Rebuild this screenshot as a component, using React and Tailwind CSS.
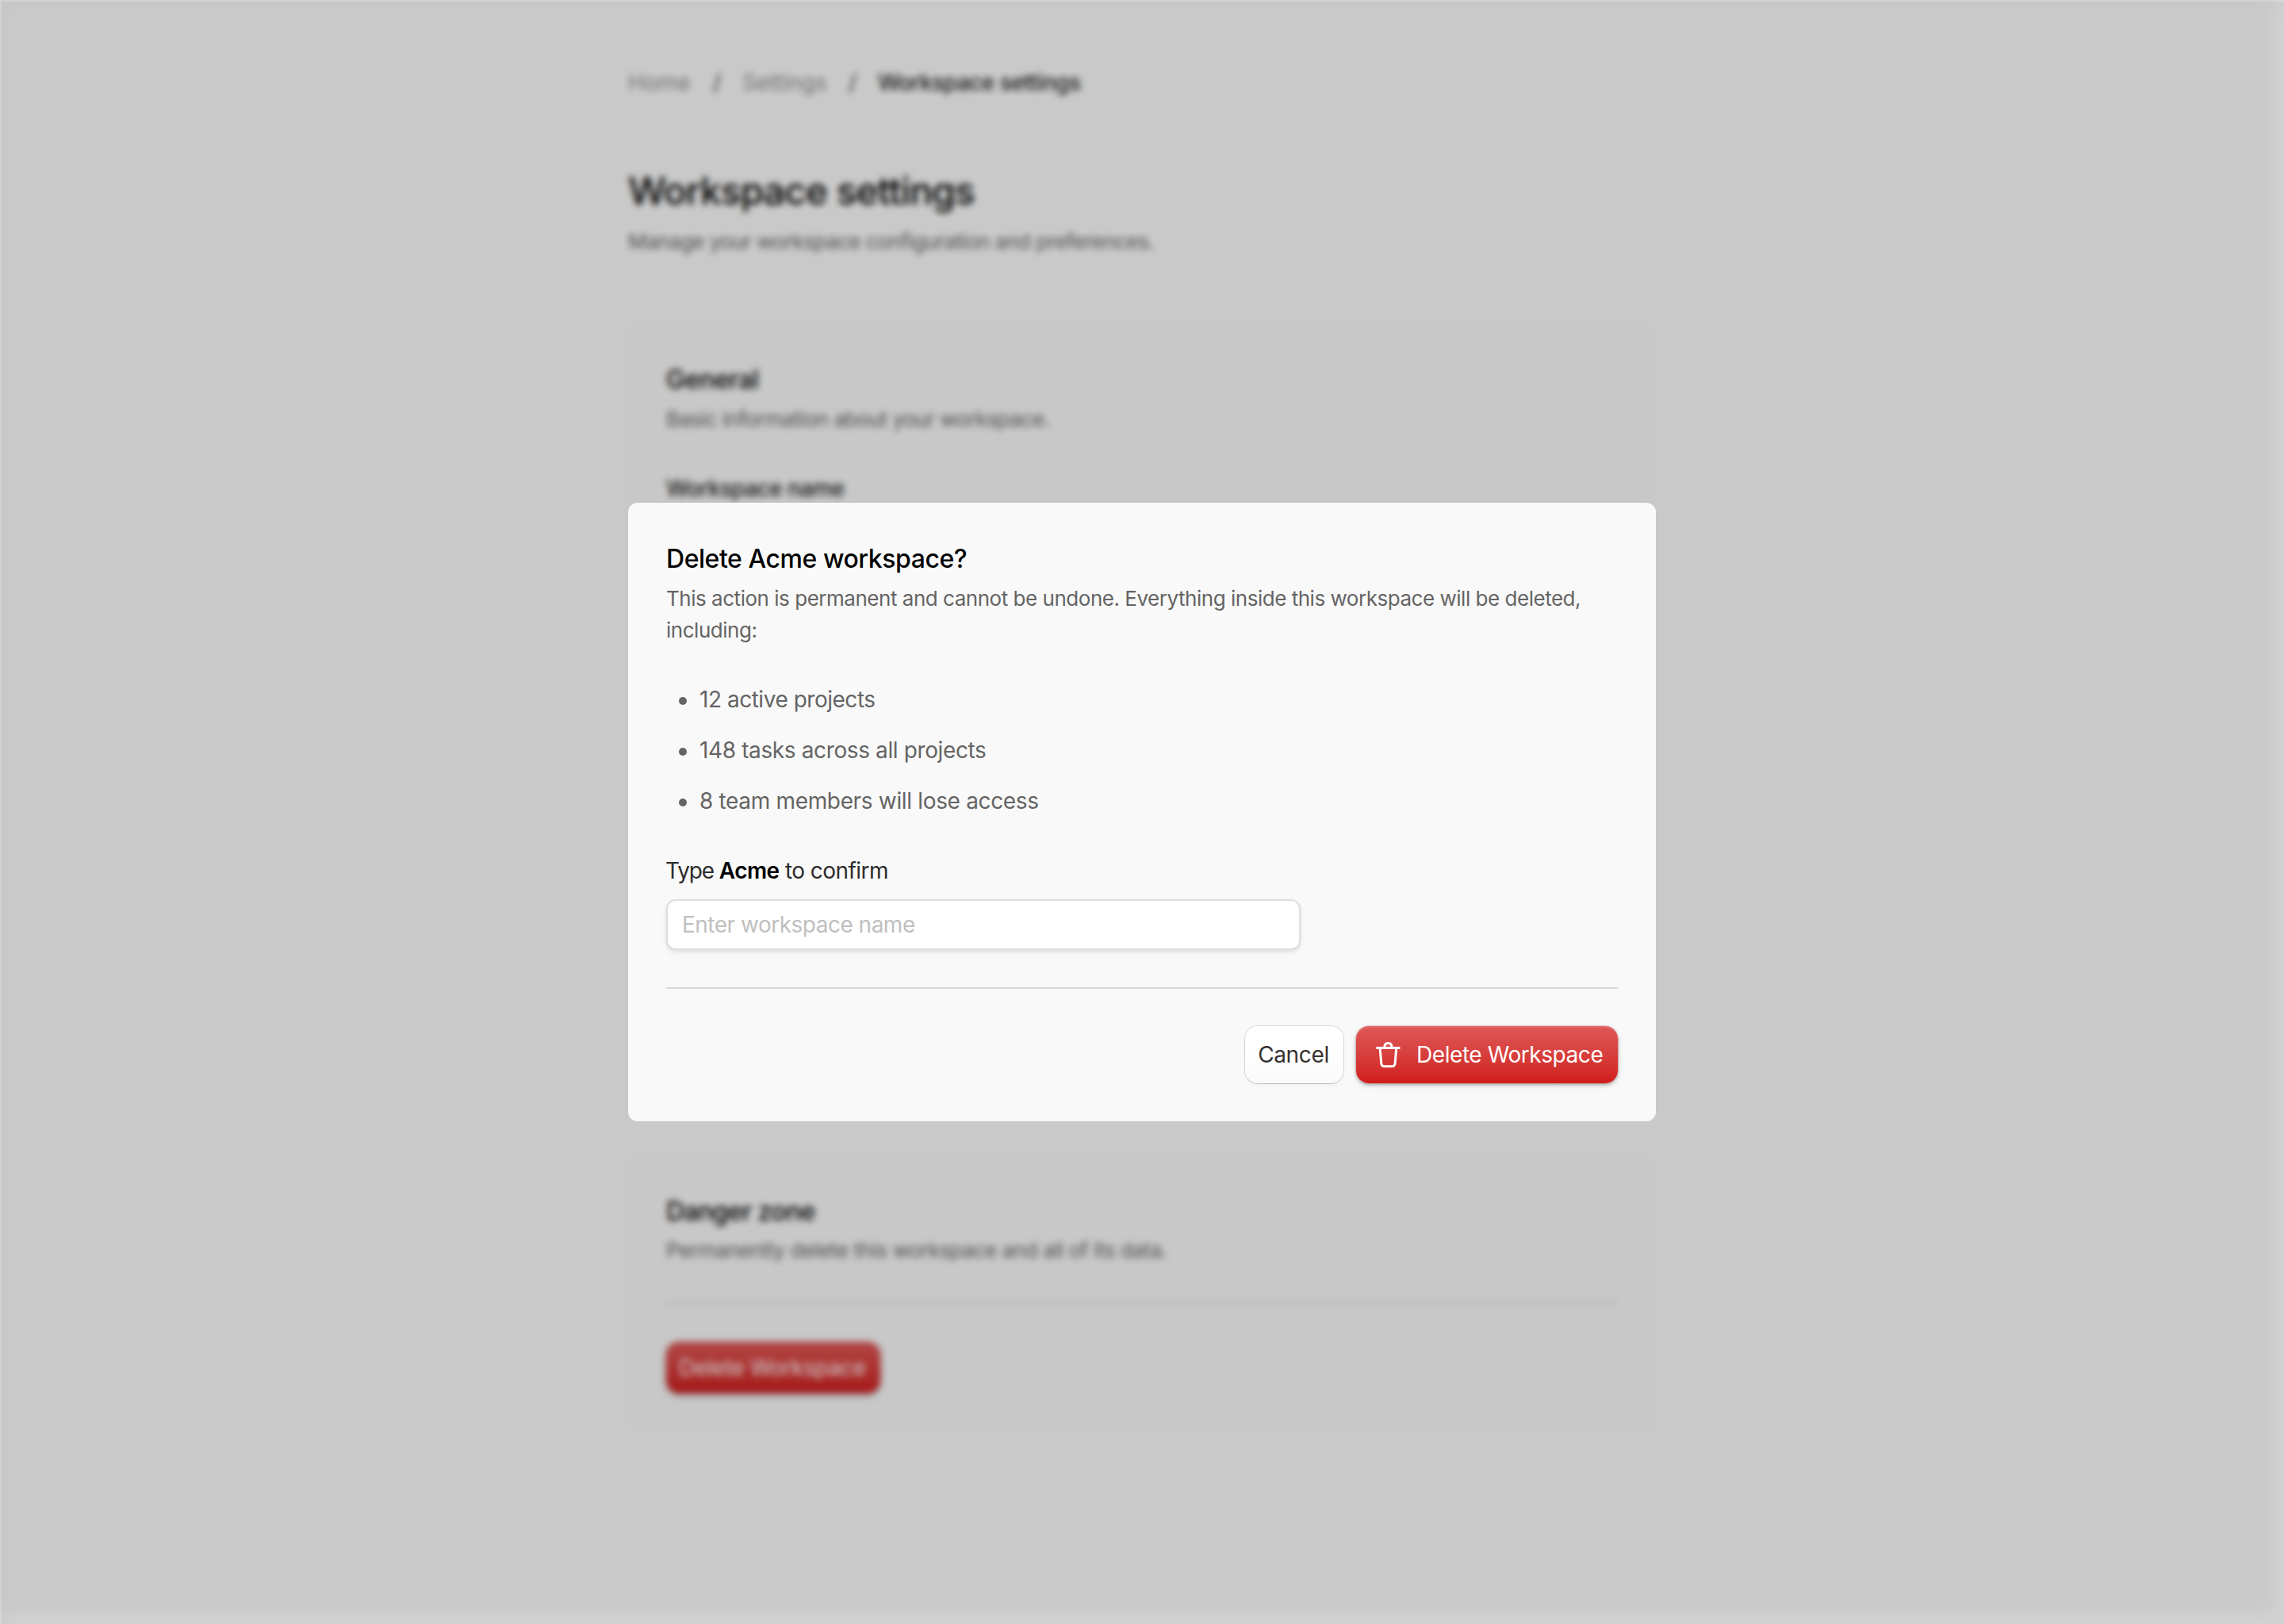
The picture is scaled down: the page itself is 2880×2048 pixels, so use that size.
const cx = (...parts) => parts.filter(Boolean).join(" ");

const CONSEQUENCES = [
  { text: "12 active projects", tracking: "tracking-[-0.017em]" },
  { text: "148 tasks across all projects", tracking: "tracking-[-0.0135em]" },
  { text: "8 team members will lose access", tracking: "tracking-[-0.012em]" },
];

function TrashIcon() {
  return (
    <svg
      className="mt-px h-[33px] w-[31px] shrink-0"
      viewBox="0 0 31 33"
      fill="none"
      stroke="currentColor"
      strokeWidth="3"
      strokeLinecap="round"
      strokeLinejoin="round"
    >
      <path d="M1.5 7.5H29.2" />
      <path d="M10.8 7C10.8 3.6 12.5 1.5 15.4 1.5S20 3.6 20 7" />
      <path d="M5.1 8L6.7 26.6Q7 30.8 10.8 30.8H20Q23.8 30.8 24.1 26.6L25.7 8" />
    </svg>
  );
}

function DangerButton({ className, children }) {
  return (
    <button
      className={cx(
        "flex items-center rounded-2xl bg-linear-to-b from-[#de5757] to-[#d01b1b] text-[28px] leading-10 tracking-[-0.0155em] text-white",
        "shadow-[0_0_0_0.5px_rgba(190,40,40,0.4),0_2px_4px_rgba(0,0,0,0.3),0_4px_8px_rgba(0,0,0,0.08),inset_0_2px_1px_rgba(255,255,255,0.12)]",
        className,
      )}
    >
      {children}
    </button>
  );
}

function Breadcrumbs() {
  return (
    <nav className="flex text-[28px] leading-10 text-[#8d8d8d]">
      <span className="w-[107px]">Home</span>
      <span className="w-[37px] text-[#3c3c3c]">/</span>
      <span className="w-[134px] tracking-[-0.002em]">Settings</span>
      <span className="w-[37px] text-[#3c3c3c]">/</span>
      <span className="font-medium tracking-[-0.0195em] text-[#202020]">Workspace settings</span>
    </nav>
  );
}

function SettingsPage() {
  return (
    <main className="mx-auto w-[1296px] pt-[84px]">
      <Breadcrumbs />
      <h1 className="mt-[87px] text-[48px] leading-[60px] font-medium tracking-[-0.021em] text-black">
        Workspace settings
      </h1>
      <p className="mt-[14px] text-[26px] leading-10 tracking-[-0.0203em] text-[#646464]">
        Manage your workspace configuration and preferences.
      </p>

      <section className="mt-[84px] h-[1001px] rounded-xl bg-[#fafafa] px-12 pt-12">
        <h2 className="text-[32px] leading-[44px] font-medium tracking-[-0.011em] text-black">General</h2>
        <p className="mt-2 text-[26px] leading-10 tracking-[-0.0195em] text-[#646464]">
          Basic information about your workspace.
        </p>
        <p className="mt-[47px] text-[28px] leading-10 font-medium tracking-[-0.022em] text-[#202020]">
          Workspace name
        </p>
      </section>

      <section className="mt-12 rounded-xl bg-[#fafafa] p-12">
        <h2 className="text-[32px] leading-[44px] font-medium tracking-[-0.02em] text-black">Danger zone</h2>
        <p className="mt-[7px] text-[26px] leading-10 tracking-[-0.0175em] text-[#646464]">
          Permanently delete this workspace and all of its data.
        </p>
        <hr className="mt-[45px] h-[2px] border-0 bg-[#dadada]" />
        <DangerButton className="mt-[48px] h-[65px] w-[270px] px-4">Delete Workspace</DangerButton>
      </section>
    </main>
  );
}

function DeleteDialog() {
  return (
    <div
      role="dialog"
      className="flex h-[780px] w-[1296px] flex-col rounded-xl bg-[#f9f9f9] p-12 text-[28px] leading-10"
    >
      <h2 className="mt-px text-[32px] leading-[44px] font-medium tracking-[-0.014em] text-black">
        Delete Acme workspace?
      </h2>
      <p className="mt-2 text-[26px] tracking-[-0.0183em] text-[#646464]">
        This action is permanent and cannot be undone. Everything inside this workspace will be deleted,
        including:
      </p>

      <ul className="mt-[47px] flex flex-col gap-6 text-[#646464]">
        {CONSEQUENCES.map((item) => (
          <li key={item.text} className="flex items-center">
            <span className="mt-1 mr-4 ml-4 size-[10px] rounded-full bg-[#646464]" />
            <span className={item.tracking}>{item.text}</span>
          </li>
        ))}
      </ul>

      <p className="mt-12 tracking-[-0.02em] text-[#2c2c2c]">
        <span className="-ml-px tracking-[-0.04em]">Type </span>
        <strong className="font-semibold text-black">Acme</strong> to confirm
      </p>
      <input
        className="mt-4 h-16 w-[800px] shrink-0 rounded-xl border-2 border-[#dedede] bg-white px-[18px] tracking-[-0.018em] shadow-[0_2px_4px_rgba(0,0,0,0.08),0_5px_9px_rgba(0,0,0,0.04)] placeholder:text-[#bfbfbf]"
        placeholder="Enter workspace name"
      />

      <hr className="mt-[47px] h-[2px] shrink-0 border-0 bg-[#d9d9d9]" />

      <div className="mt-[47px] flex justify-end gap-4">
        <button className="h-[72px] w-[124px] rounded-2xl bg-linear-to-b from-white from-40% to-[#fafafa] pr-[2px] tracking-[-0.013em] text-[#353232] shadow-[0_0_0_1px_rgba(0,0,0,0.13),0_1px_1px_rgba(0,0,0,0.08),0_4px_6px_rgba(0,0,0,0.03)]">
          Cancel
        </button>
        <DangerButton className="h-[72px] w-[330px] gap-5 pl-[25px]">
          <TrashIcon />
          <span>Delete Workspace</span>
        </DangerButton>
      </div>
    </div>
  );
}

export default function App() {
  return (
    <div className="relative h-[2048px] w-[2880px] overflow-hidden bg-[#fcfcfc] font-['Inter',sans-serif] antialiased">
      <SettingsPage />
      <div className="absolute inset-0 flex items-center justify-center bg-black/20 shadow-[inset_2px_2px_0_rgba(255,255,255,0.2),inset_8px_8px_20px_rgba(0,0,0,0.02),inset_-10px_-10px_24px_rgba(255,255,255,0.16)] backdrop-blur-[4px]">
        <DeleteDialog />
      </div>
    </div>
  );
}
